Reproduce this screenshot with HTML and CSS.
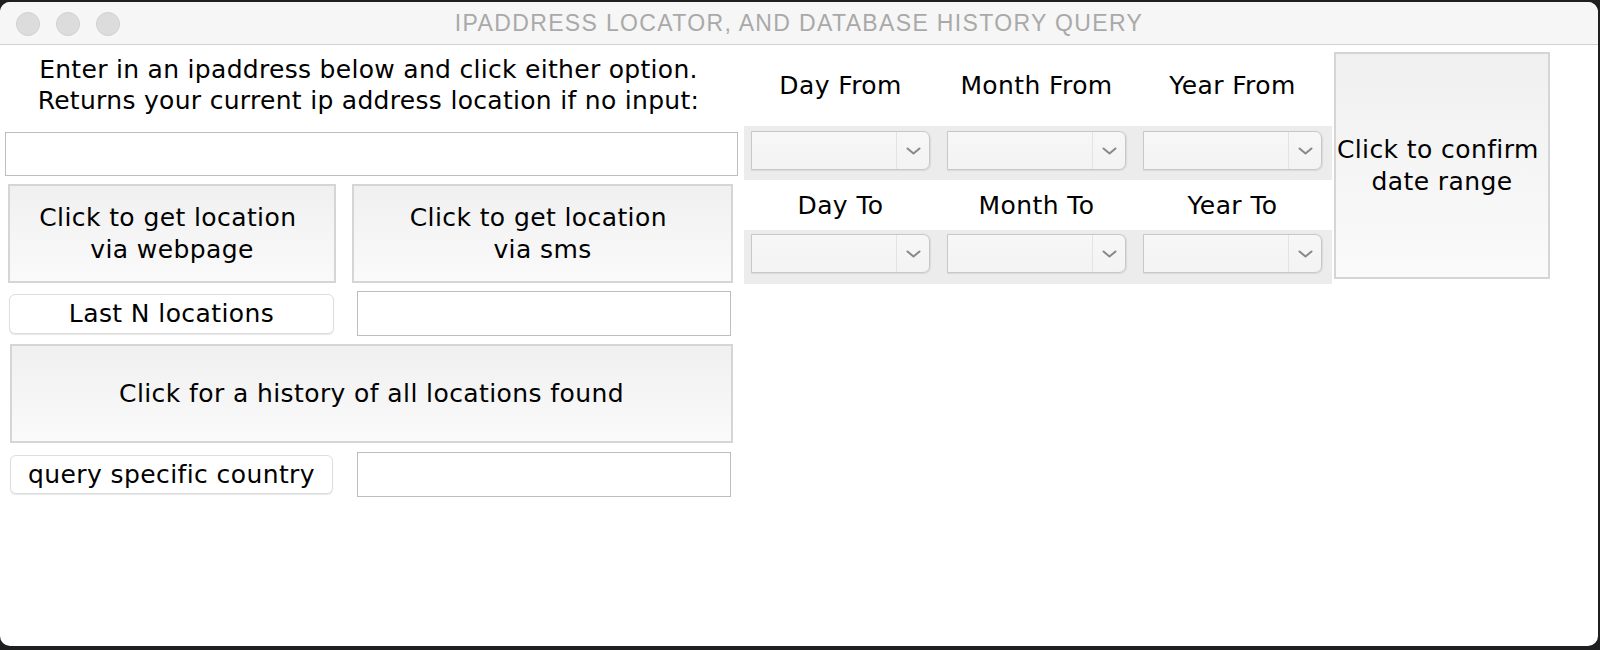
FILE: index.html
```html
<!DOCTYPE html>
<html>
<head>
<meta charset="utf-8">
<title>IPADDRESS LOCATOR</title>
<link rel="stylesheet" href="styles.css">
</head>
<body>
<div class="desktop">
  <div class="window">
    <div class="titlebar">
      <div class="lights">
        <span class="light"></span>
        <span class="light"></span>
        <span class="light"></span>
      </div>
      <div class="title">IPADDRESS LOCATOR, AND DATABASE HISTORY QUERY</div>
    </div>
    <div class="content">
      <div class="left">
        <p class="intro">Enter in an ipaddress below and click either option.<br>Returns your current ip address location if no input:</p>
        <div class="entry entry-ip"></div>
        <div class="row row-btns">
          <div class="btn btn-web">Click to get location 
via webpage</div>
          <div class="btn btn-sms">Click to get location 
via sms</div>
        </div>
        <div class="row row-lastn">
          <div class="pill pill-lastn">Last N locations</div>
          <div class="entry entry-small"></div>
        </div>
        <div class="btn btn-history">Click for a history of all locations found</div>
        <div class="row row-query">
          <div class="pill pill-query">query specific country</div>
          <div class="entry entry-small entry-query"></div>
        </div>
      </div>
      <div class="dates">
        <div class="labels labels-from">
          <span>Day From</span><span>Month From</span><span>Year From</span>
        </div>
        <div class="band band-from">
          <div class="combo"><div class="combo-arrow"><svg width="15" height="8" viewBox="0 0 15 8"><polyline points="1.5,1.5 7.5,6.5 13.5,1.5" fill="none" stroke="#888888" stroke-width="2" stroke-linecap="round" stroke-linejoin="round"/></svg></div></div>
          <div class="combo"><div class="combo-arrow"><svg width="15" height="8" viewBox="0 0 15 8"><polyline points="1.5,1.5 7.5,6.5 13.5,1.5" fill="none" stroke="#888888" stroke-width="2" stroke-linecap="round" stroke-linejoin="round"/></svg></div></div>
          <div class="combo"><div class="combo-arrow"><svg width="15" height="8" viewBox="0 0 15 8"><polyline points="1.5,1.5 7.5,6.5 13.5,1.5" fill="none" stroke="#888888" stroke-width="2" stroke-linecap="round" stroke-linejoin="round"/></svg></div></div>
        </div>
        <div class="labels labels-to">
          <span>Day To</span><span>Month To</span><span>Year To</span>
        </div>
        <div class="band band-to">
          <div class="combo"><div class="combo-arrow"><svg width="15" height="8" viewBox="0 0 15 8"><polyline points="1.5,1.5 7.5,6.5 13.5,1.5" fill="none" stroke="#888888" stroke-width="2" stroke-linecap="round" stroke-linejoin="round"/></svg></div></div>
          <div class="combo"><div class="combo-arrow"><svg width="15" height="8" viewBox="0 0 15 8"><polyline points="1.5,1.5 7.5,6.5 13.5,1.5" fill="none" stroke="#888888" stroke-width="2" stroke-linecap="round" stroke-linejoin="round"/></svg></div></div>
          <div class="combo"><div class="combo-arrow"><svg width="15" height="8" viewBox="0 0 15 8"><polyline points="1.5,1.5 7.5,6.5 13.5,1.5" fill="none" stroke="#888888" stroke-width="2" stroke-linecap="round" stroke-linejoin="round"/></svg></div></div>
        </div>
      </div>
      <div class="btn btn-confirm">Click to confirm 
date range</div>
    </div>
  </div>
</div>
</body>
</html>
```

FILE: styles.css
```css
* { box-sizing: border-box; }

html, body {
  margin: 0;
  padding: 0;
  width: 1600px;
  height: 650px;
  overflow: hidden;
  background: #1e1f21;
}

.desktop {
  width: 1600px;
  height: 650px;
  padding: 2px 2px 4px 0;
}

.window {
  width: 1598px;
  height: 644px;
  background: #ffffff;
  border-radius: 10px;
  overflow: hidden;
  font-family: "DejaVu Sans", "Liberation Sans", sans-serif;
  font-size: 25px;
  letter-spacing: 0.4px;
  color: #000;
}

.titlebar {
  height: 43px;
  background: #f6f6f6;
  border-bottom: 1px solid #d2d2d2;
  display: flex;
  align-items: center;
  position: relative;
}

.lights {
  display: flex;
  gap: 16px;
  padding-left: 16px;
  position: absolute;
  left: 0;
  top: 10px;
}

.light {
  width: 24px;
  height: 24px;
  border-radius: 50%;
  background: #dcdcdc;
  border: 1px solid #d0d0d0;
}

.title {
  width: 100%;
  text-align: center;
  font-family: "Liberation Sans", Arial, sans-serif;
  font-size: 23px;
  letter-spacing: 1.35px;
  color: #a9a9a9;
  padding-top: 1px;
}

.content {
  display: flex;
  align-items: flex-start;
  padding-left: 5px;
}

.left {
  width: 733px;
  display: flex;
  flex-direction: column;
}

.intro {
  margin: 9px 0 0 0;
  height: 62px;
  line-height: 31px;
  text-align: center;
  letter-spacing: 0.3px;
  padding-right: 6px;
}

.entry {
  background: #fff;
  border: 1px solid #bdbdbd;
}

.entry-ip {
  margin-top: 16px;
  height: 44px;
  width: 733px;
}

.row {
  display: flex;
  align-items: center;
}

.btn {
  display: flex;
  align-items: center;
  justify-content: center;
  text-align: center;
  white-space: pre;
  line-height: 32px;
  border: 2px solid #d5d5d5;
  background: linear-gradient(#f0f0f0, #fafafa);
}

.row-btns {
  margin-top: 8px;
  padding-left: 3px;
  gap: 16px;
}

.btn-web { width: 328px; height: 99px; }
.btn-sms { width: 381px; height: 99px; }

.pill {
  display: flex;
  align-items: center;
  justify-content: center;
  background: #fff;
  border: 1px solid #dedede;
  border-radius: 6px;
  box-shadow: 0 1px 1px rgba(0, 0, 0, 0.1);
}

.row-lastn {
  margin-top: 8px;
  height: 45px;
}

.pill-lastn {
  margin-left: 4px;
  width: 325px;
  height: 40px;
}

.entry-small {
  width: 374px;
  height: 45px;
  margin-left: 23px;
}

.btn-history {
  margin-top: 8px;
  margin-left: 5px;
  width: 723px;
  height: 99px;
}

.row-query {
  margin-top: 9px;
  height: 45px;
}

.pill-query {
  margin-left: 5px;
  width: 323px;
  height: 39px;
}

.entry-query { margin-left: 24px; }

.dates {
  margin-left: 6px;
  width: 588px;
}

.labels {
  display: grid;
  grid-template-columns: repeat(3, 179px);
  column-gap: 17px;
  padding-left: 7px;
  align-items: center;
  justify-items: center;
  white-space: nowrap;
}

.labels-from { height: 81px; }
.labels-to { height: 50px; }

.band {
  background: #ececec;
  display: grid;
  grid-template-columns: repeat(3, 179px);
  column-gap: 17px;
  padding-left: 7px;
  height: 54px;
}

.band-from { padding-top: 5px; }
.band-to { padding-top: 4px; }

.combo {
  width: 179px;
  height: 39px;
  border: 1px solid #c8c8c8;
  border-radius: 0 7px 7px 0;
  background: linear-gradient(#f7f7f7, #f3f3f3);
  box-shadow: 0.5px 0.5px 1px rgba(0, 0, 0, 0.08);
  display: flex;
  justify-content: flex-end;
}

.combo-arrow {
  width: 33px;
  height: 100%;
  border-left: 1px solid #e3e3e3;
  display: flex;
  align-items: center;
  justify-content: center;
}

.btn-confirm {
  margin-left: 2px;
  margin-top: 7px;
  width: 216px;
  height: 227px;
}
```
